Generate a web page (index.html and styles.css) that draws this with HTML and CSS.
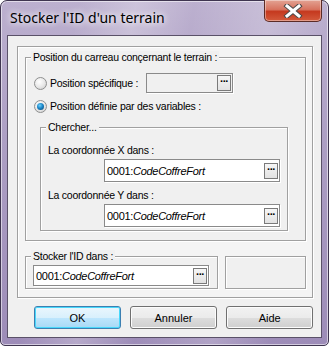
FILE: index.html
```html
<!DOCTYPE html>
<html lang="fr">
<head>
  <meta charset="UTF-8">
  <title>Stocker l'ID d'un terrain</title>
  <link rel="stylesheet" href="styles.css">
</head>
<body>
  <div class="window">
    <div class="titlebar">
      <span class="title">Stocker l'ID d'un terrain</span>
      <div class="close">
        <svg width="20" height="14" viewBox="0 0 20 14">
          <path d="M4 2 L16 12 M16 2 L4 12" stroke="#4a4a4a" stroke-width="5" stroke-linecap="square"/>
          <path d="M4 2 L16 12 M16 2 L4 12" stroke="#ffffff" stroke-width="3" stroke-linecap="square"/>
        </svg>
      </div>
    </div>
    <div class="client">
      <div class="panel">
        <fieldset class="group group-pos">
          <legend>Position du carreau conçernant le terrain :</legend>
          <div class="radio-row first">
            <span class="radio"></span>
            <span class="radio-label">Position spécifique :</span>
            <div class="field disabled pos-field">
              <span class="field-text"></span>
              <span class="dots">&middot;&middot;&middot;</span>
            </div>
          </div>
          <div class="radio-row second">
            <span class="radio checked"></span>
            <span class="radio-label">Position définie par des variables :</span>
          </div>
          <fieldset class="group group-search">
            <legend>Chercher...</legend>
            <div class="label label-x">La coordonnée X dans :</div>
            <div class="field var-field">
              <span class="field-text">0001:<i>CodeCoffreFort</i></span>
              <span class="dots">&middot;&middot;&middot;</span>
            </div>
            <div class="label label-y">La coordonnée Y dans :</div>
            <div class="field var-field">
              <span class="field-text">0001:<i>CodeCoffreFort</i></span>
              <span class="dots">&middot;&middot;&middot;</span>
            </div>
          </fieldset>
        </fieldset>
        <div class="bottom-row">
          <fieldset class="group group-store">
            <legend>Stocker l'ID dans :</legend>
            <div class="field store-field">
              <span class="field-text">0001:<i>CodeCoffreFort</i></span>
              <span class="dots">&middot;&middot;&middot;</span>
            </div>
          </fieldset>
          <div class="empty-box"></div>
        </div>
      </div>
      <div class="buttons">
        <button class="btn default">OK</button>
        <button class="btn">Annuler</button>
        <button class="btn">Aide</button>
      </div>
    </div>
  </div>
</body>
</html>
```

FILE: styles.css
```css
* {
  box-sizing: border-box;
}
body {
  margin: 0;
  background: #ffffff;
  font-family: 'Liberation Sans', Arial, sans-serif;
  font-size: 10.5px;
  letter-spacing: -0.25px;
  color: #000;
}
.window {
  position: relative;
  width: 329px;
  height: 346px;
  border: 1px solid #3f3550;
  border-radius: 7px 7px 5px 5px;
  padding: 34px 7px 7px 6px;
  background:
    linear-gradient(100deg, rgba(255,255,255,0) 20%, rgba(255,255,255,0.25) 35%, rgba(255,255,255,0) 50%, rgba(255,255,255,0.2) 70%, rgba(255,255,255,0) 85%),
    linear-gradient(180deg, #bcb0cf 0%, #ad9fc4 40%, #9d8cb8 100%);
  box-shadow: inset 0 0 0 1px rgba(255,255,255,0.55);
}
.titlebar {
  position: absolute;
  top: 0;
  left: 0;
  right: 0;
  height: 34px;
}
.title {
  display: block;
  padding: 8px 0 0 9px;
  font-family: 'Noto Sans', 'Open Sans', sans-serif;
  font-size: 14px;
  letter-spacing: 0;
  line-height: 18px;
  color: #000;
  text-shadow: 0 0 6px #fff, 0 0 8px rgba(255,255,255,0.8);
}
.close {
  position: absolute;
  top: -1px;
  right: 6px;
  width: 58px;
  height: 22px;
  border: 1px solid #5b2b26;
  border-top: none;
  border-radius: 0 0 5px 5px;
  background: linear-gradient(180deg, #e3a393 0%, #d7735f 45%, #c5391f 55%, #d35a3c 100%);
  box-shadow: inset 0 0 0 1px rgba(255,255,255,0.4);
  display: flex;
  align-items: center;
  justify-content: center;
}
.client {
  width: 315px;
  height: 303px;
  border: 1px solid #5a5168;
  background: #f0f0f0;
  padding: 10px 8px 8px 9px;
}
.panel {
  width: 296px;
  height: 252px;
  border: 1px solid #a0a0a0;
  box-shadow: inset 1px 1px 0 #fff, 1px 1px 0 #fff;
  padding: 4px 6px 0 7px;
  background: #f4f4f4;
}
.group {
  margin: 0;
  border: 1px solid #a0a0a0;
  box-shadow: inset 1px 1px 0 #fff, 1px 1px 0 #fff;
  background: #f0f0f0;
  min-width: 0;
}
.group legend {
  padding: 0 2px;
  margin-left: -2px;
  line-height: 13px;
  background: #f0f0f0;
}
.group-pos {
  width: 281px;
  height: 190px;
  padding: 9px 16px 0 7px;
}
.radio-row {
  display: flex;
  align-items: center;
}
.radio-row.first {
  height: 20px;
}
.radio-row.first .radio-label {
  width: 93px;
}
.radio-row.second {
  height: 14px;
  margin-top: 6px;
}
.radio {
  flex: none;
  width: 13px;
  height: 13px;
  margin-left: 1px;
  border-radius: 50%;
  border: 1px solid #8e8f8f;
  background: radial-gradient(circle at 40% 35%, #ffffff 0%, #e9e9e9 50%, #c9c9c9 100%);
  display: flex;
  align-items: center;
  justify-content: center;
}
.radio.checked::after {
  content: "";
  width: 7px;
  height: 7px;
  border-radius: 50%;
  background: radial-gradient(circle at 40% 35%, #6fd0fb 0%, #1b87c9 45%, #0b3d66 100%);
}
.radio-label {
  margin-left: 3px;
  white-space: nowrap;
}
.field {
  display: flex;
  align-items: center;
  border: 1px solid #8a8a8a;
  box-shadow: 1px 1px 0 #fff;
  background: #fff;
}
.field.disabled {
  background: #f0f0f0;
}
.field-text {
  flex: 1;
  padding-left: 2px;
  font-size: 11px;
  letter-spacing: -0.3px;
  white-space: nowrap;
}
.dots {
  width: 14px;
  height: 16px;
  margin-right: 1px;
  border: 1px solid #7a7a7a;
  background: linear-gradient(180deg, #f6f6f6, #e2e2e2);
  font-weight: bold;
  font-size: 11px;
  line-height: 11px;
  letter-spacing: -1px;
  text-align: center;
  color: #000;
}
.pos-field {
  flex: none;
  width: 87px;
  height: 20px;
  margin-left: 3px;
}
.group-search {
  width: 248px;
  height: 110px;
  margin: 8px 0 0 7px;
  padding: 10px 7px 0 7px;
}
.label {
  line-height: 13px;
}
.label-y {
  margin-top: 7px;
}
.var-field {
  width: 176px;
  height: 23px;
  margin: 2px 0 0 56px;
}
.bottom-row {
  display: flex;
  margin-top: 9px;
}
.group-store {
  width: 193px;
  height: 39px;
  padding: 2px 7px 0 7px;
}
.store-field {
  width: 176px;
  height: 21px;
}
.empty-box {
  width: 81px;
  height: 33px;
  margin: 6px 0 0 7px;
  border: 1px solid #a0a0a0;
  box-shadow: inset 1px 1px 0 #fff, 1px 1px 0 #fff;
  background: #f0f0f0;
}
.buttons {
  display: flex;
  gap: 9px;
  margin: 8px 0 0 17px;
}
.btn {
  width: 87px;
  height: 23px;
  padding: 0;
  font-family: 'Liberation Sans', Arial, sans-serif;
  font-size: 11px;
  color: #000;
  border: 1px solid #707070;
  border-radius: 3px;
  background: linear-gradient(180deg, #f2f2f2 0%, #ebebeb 50%, #dddddd 51%, #cfcfcf 100%);
  box-shadow: inset 0 0 0 1px #fcfcfc;
}
.btn:nth-child(2) {
  width: 88px;
}
.btn.default {
  border-color: #3c7fb1;
  background: linear-gradient(180deg, #eaf6fd 0%, #d9f0fc 50%, #bee6fd 51%, #a7d9f5 100%);
  box-shadow: inset 0 0 0 1px #48d8fb;
}
```
